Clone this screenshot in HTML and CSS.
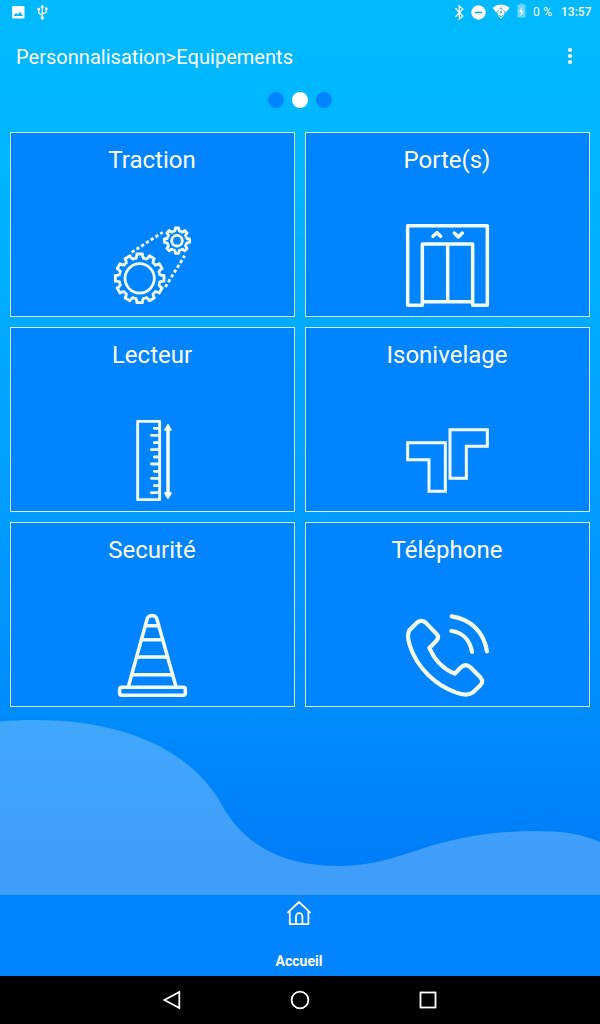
FILE: index.html
```html
<!DOCTYPE html>
<html lang="fr">
<head>
<meta charset="utf-8">
<title>Personnalisation</title>
<link rel="stylesheet" href="styles.css">
</head>
<body>
<div class="screen">
  <header class="status">
    <svg class="status-left" width="40" height="24" viewBox="0 0 40 24">
      <path fill="#fff" fill-rule="evenodd" d="M2 6h10.600q.9 0 .9.900v10.600q0 .9-.9.900H2q-.9 0-.9-.9V6.900Q1.100 6 2 6zM2.500 16h9.500l-3-4.200-2.300 2.900-1.600-1.900z"/>
      <g fill="none" stroke="#fff" stroke-width="1.300"><path d="M31.300 6v12M27.700 10v2.500q0 1.500 3.600 2.500M35.300 9v2.500q0 1.500-4 2.300"/></g>
      <path fill="#fff" d="M31.300 4.500l2 3h-4zM34 7.500h2.600v2.600H34z"/><circle cx="27.700" cy="9.200" r="1.400" fill="#fff"/><circle cx="31.300" cy="18" r="1.700" fill="#fff"/>
    </svg>
    <div class="status-right">
      <svg width="76" height="24" viewBox="0 0 76 24">
        <path d="M3.500 8.300l7.300 7.700-3.500 3V6l3.500 3-7.300 7.700" fill="none" stroke="#fff" stroke-width="1.300"/>
        <circle cx="26.500" cy="12.500" r="7.200" fill="#fff"/><path d="M22.800 12.500h7.400" stroke="#00a8f0" stroke-width="1.500"/>
        <path d="M40.500 7.800q8.500-6.500 17.200 0L49 18.700z" fill="#fff"/>
        <path d="M47.200 9.500l1.800-1.800 1.800 1.800M47.200 15l1.800 1.800 1.800-1.800M46.300 10.500L44.600 12.300l1.700 1.800M51.700 10.500l1.700 1.800-1.700 1.800" fill="none" stroke="#079bdc" stroke-width="1"/><circle cx="49" cy="12.300" r="1" fill="#079bdc"/>
        <path d="M67 4.500h1.500V3.400h3v1.100H73q1 0 1 1v11q0 1-1 1h-6q-1 0-1-1v-11q0-1 1-1z" transform="translate(-.5)" fill="#6fd5ff"/>
        <path d="M70 7l-3 5h2l-.500 4 3.200-5.300h-2z" fill="#fff"/>
      </svg>
      <span class="battery">0 %</span><span class="clock">13:57</span>
    </div>
  </header>
  <div class="appbar">
    <h1>Personnalisation&gt;Equipements</h1>
    <svg width="6" height="18" viewBox="0 0 6 18" fill="#fff"><circle cx="3" cy="3" r="2"/><circle cx="3" cy="9" r="2"/><circle cx="3" cy="15" r="2"/></svg>
  </div>
  <div class="dots"><i></i><i class="active"></i><i></i></div>

  <main class="grid">
    <section class="card"><h2>Traction</h2>
      <svg class="icon" viewBox="0 0 303 300">
        <defs>
          <path id="big" d="M-16.300-60.900L-11.500-60-9-66-8.500-73H8.500L9-66 11.500-60 16.300-60.900"/>
          <path id="small" d="M-11.100-26.800L-6.500-30-5-38H5L6.500-30 11.100-26.800"/>
        </defs>
        <g class="thin">
          <g transform="translate(113 190)">
            <circle r="44"/>
            <use href="#big"/><use href="#big" transform="rotate(30)"/><use href="#big" transform="rotate(60)"/><use href="#big" transform="rotate(90)"/><use href="#big" transform="rotate(120)"/><use href="#big" transform="rotate(150)"/><use href="#big" transform="rotate(180)"/><use href="#big" transform="rotate(210)"/><use href="#big" transform="rotate(240)"/><use href="#big" transform="rotate(270)"/><use href="#big" transform="rotate(300)"/><use href="#big" transform="rotate(330)"/>
          </g>
          <g transform="translate(225 77)">
            <circle r="16"/>
            <use href="#small"/><use href="#small" transform="rotate(45)"/><use href="#small" transform="rotate(90)"/><use href="#small" transform="rotate(135)"/><use href="#small" transform="rotate(180)"/><use href="#small" transform="rotate(225)"/><use href="#small" transform="rotate(270)"/><use href="#small" transform="rotate(315)"/>
          </g>
          <path class="belt" d="M89 112L182 52M190 216L248 122"/>
        </g>
      </svg>
    </section>
    <section class="card"><h2>Porte(s)</h2>
      <svg class="icon" viewBox="0 0 303 300">
        <path d="M32 32H271V271H227V87H76V271H32ZM76 260H227M152 87V260"/>
        <path d="M108 64L120 53 131 64M172 54L184 66 196 54" stroke-linecap="round"/>
      </svg>
    </section>
    <section class="card"><h2>Lecteur</h2>
      <svg class="icon" viewBox="0 0 303 300">
        <path class="thin" d="M107 34H173V269H107Z"/>
        <path class="thin" stroke-linecap="round" d="M157 55H172M148 76H172M157 98H172M148 119H172M157 141H172M148 162H172M157 184H172M148 205H172M157 227H172M148 248H172"/>
        <path d="M198 55V254"/>
        <path class="solid" d="M198 44L208 60H188ZM198 265L208 249H188Z"/>
      </svg>
    </section>
    <section class="card"><h2>Isonivelage</h2>
      <svg class="icon" viewBox="0 0 303 300">
        <path class="sharp" d="M32 98H145V244H96V149H32ZM159 59H271V109H208V205H159Z"/>
      </svg>
    </section>
    <section class="card"><h2>Securité</h2>
      <svg class="icon" viewBox="0 0 303 300">
        <path d="M79 245L136 40Q140 32 147 32H153Q161 32 164 40L222 245M132 62H169M121 104H180M107 156H195M92 209H209"/>
        <rect x="53" y="247" width="197" height="24" rx="6"/>
      </svg>
    </section>
    <section class="card"><h2>Téléphone</h2>
      <svg class="icon" viewBox="0 0 303 300">
        <path class="bold" d="M37 76L60 53Q73 42 86 53L118 86Q129 97 117 109L97 129C112 163 138 192 173 206L192 187Q206 174 220 187L250 217Q261 229 250 241L229 261C216 272 194 269 176 262C116 240 59 188 38 120Q29 91 37 76Z"/>
        <path class="bold" d="M164 34C222 42 261 82 270 139M163 78C196 82 219 105 225 141" stroke-linecap="round"/>
      </svg>
    </section>
  </main>

  <svg class="wave" viewBox="0 0 600 175">
    <path fill="#fff" fill-opacity=".25" d="M0 1.500C12 .5 22 0 35 0C122 0 185 28 218 78C240 122 278 146 338 146C368 146 390 139 412 132C455 117 494 111 536 111C562 111 582 114 600 122V175H0Z"/>
  </svg>

  <footer class="home">
    <svg width="26" height="26" viewBox="0 0 26 26" fill="none" stroke="#fff" stroke-width="1.800" stroke-linecap="round" stroke-linejoin="round"><path d="M2 12.300L13 2l11 10.300M3.800 11v13.200h18.600V11M10 24v-7q0-3.800 3.200-3.800t3.200 3.800v7"/></svg>
    <span>Accueil</span>
  </footer>
  <nav class="navbar">
    <svg width="20" height="20" viewBox="0 0 20 20"><path d="M17.300 2v16L2.500 10z"/></svg>
    <svg width="20" height="20" viewBox="0 0 20 20"><circle cx="10" cy="10" r="8.400"/></svg>
    <svg width="20" height="20" viewBox="0 0 20 20"><rect x="2.500" y="2.500" width="15" height="15"/></svg>
  </nav>
</div>
</body>
</html>
```
FILE: styles.css
```css
* { box-sizing: border-box; }
body { margin: 0; font-family: Roboto, sans-serif; color: #fff; }
h1, h2 { margin: 0; font-weight: 400; }
svg { display: block; flex: none; }
.screen {
  width: 600px; height: 1024px; display: flex; flex-direction: column;
  background: linear-gradient(#00b9ff 0, #00b7ff 150px, #009dff 500px, #008dfb 700px, #007df8 860px);
}
.status { height: 24px; display: flex; justify-content: space-between; padding: 0 8px 0 11px; }
.status-right { display: flex; line-height: 24px; }
.status-right svg { margin-right: 5px; }
.battery { font-size: 12px; width: 28px; letter-spacing: .3px; }
.clock { font-size: 12px; font-weight: 500; width: 31px; white-space: nowrap; }
.appbar { height: 66px; display: flex; justify-content: space-between; align-items: center; padding: 0 27px 0 16px; }
.appbar h1 { font-size: 20px; line-height: 24px; letter-spacing: .03px; }
.appbar svg { margin-bottom: 2px; }
.dots { height: 42px; display: flex; justify-content: center; gap: 8px; padding-top: 2px; }
.dots i { width: 16px; height: 16px; border-radius: 50%; background: #0084ff; }
.dots .active { background: #fff; }
.grid { display: grid; grid-template-columns: 285px 285px; grid-auto-rows: 185px; gap: 10px; padding: 0 10px; }
.card { border: 1px solid #d5f5ff; background: #0084ff; display: flex; flex-direction: column; justify-content: space-between; align-items: center; padding: 12px 0 1px; }
.card h2 { font-size: 24px; line-height: 30px; padding-right: 1px; }
.icon { width: 101px; height: 100px; fill: none; stroke: #f4ffff; stroke-width: 10.5; stroke-linejoin: round; }
.icon .thin { stroke-width: 8.5; }
.icon .bold { stroke-width: 12.5; }
.icon .sharp { stroke-width: 9; stroke-linejoin: miter; }
.icon .belt { stroke-dasharray: 10 7; }
.icon .solid { fill: #f4ffff; stroke-width: 4; }
.wave { width: 600px; height: 175px; margin-top: auto; }
.home { height: 81px; background: #0084ff; display: flex; flex-direction: column; align-items: center; justify-content: space-between; padding: 5px 2px 7px 0; font-size: 14px; line-height: 16px; font-weight: 700; }
.navbar { height: 48px; background: #000; display: flex; justify-content: center; align-items: center; gap: 108px; }
.navbar svg { fill: none; stroke: #fff; stroke-width: 1.8; }
```
